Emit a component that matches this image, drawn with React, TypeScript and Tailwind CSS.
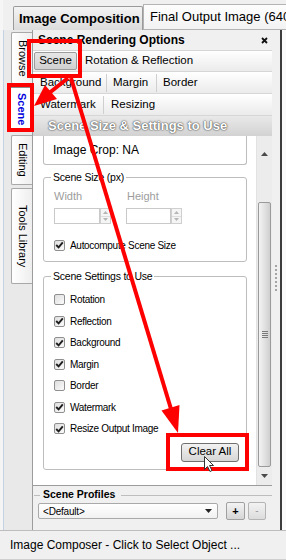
import React from "react";

const F = "font-['Liberation_Sans',Arial,sans-serif]";

function Check({ checked }: { checked?: boolean }) {
  return (
    <span className="w-[11px] h-[11px] shrink-0 rounded-[2px] border border-[#8f8f8f] bg-gradient-to-br from-[#dedede] to-[#fbfbfb] flex items-center justify-center">
      {checked && (
        <svg width="9" height="8" viewBox="0 0 9 8">
          <path d="M1.2 4 L3.6 6.4 L7.8 1.4" stroke="#1e1e1e" strokeWidth="1.9" fill="none" />
        </svg>
      )}
    </span>
  );
}

function Spinner() {
  return (
    <div className="w-[11px] h-[16px] flex flex-col border border-[#cfcfcf] bg-[#f5f5f5]">
      <div className="flex-1 flex items-center justify-center border-b border-[#dddddd]">
        <svg width="5" height="3" viewBox="0 0 5 3">
          <path d="M0 3 L2.5 0 L5 3Z" fill="#b5b5b5" />
        </svg>
      </div>
      <div className="flex-1 flex items-center justify-center">
        <svg width="5" height="3" viewBox="0 0 5 3">
          <path d="M0 0 L2.5 3 L5 0Z" fill="#b5b5b5" />
        </svg>
      </div>
    </div>
  );
}

function VTab({ label, h, active }: { label: string; h: string; active?: boolean }) {
  return (
    <div
      className={`${h} ${
        active
          ? "w-[23px] bg-white text-[#0000dd] font-bold border-[#8c8c8c]"
          : "w-[21px] bg-gradient-to-r from-[#ffffff] to-[#eeeeee] text-black border-[#a8a8a8]"
      } border border-r-0 rounded-l-[2px] flex items-center justify-center text-[11px] leading-none`}
    >
      <span className="[writing-mode:vertical-rl] whitespace-nowrap">{label}</span>
    </div>
  );
}

const settings: [string, boolean][] = [
  ["Rotation", false],
  ["Reflection", true],
  ["Background", true],
  ["Margin", true],
  ["Border", false],
  ["Watermark", true],
  ["Resize Output Image", true],
];

export default function App() {
  return (
    <div className={`w-[286px] h-[560px] relative overflow-hidden bg-[#f0f0f0] ${F} text-black flex flex-col`}>
      {/* top document tabs */}
      <div className="h-[30px] shrink-0 flex items-end pl-[10px] border-l-[3px] border-[#f6f6f6]">
        <div className="w-[130px] h-[24px] border border-b-0 border-[#9a9a9a] rounded-t-[2px] bg-gradient-to-b from-[#f4f4f4] to-[#dcdcdc] flex items-center pl-[5px] text-[13px] font-bold whitespace-nowrap">
          Image Composition
        </div>
        <div className="flex-1 min-w-0 h-[26px] border-t border-l border-b border-[#b3b3b3] bg-gradient-to-b from-[#fdfdfd] to-[#f3f3f3] flex items-center pl-[6px] text-[13px] whitespace-nowrap overflow-hidden">
          Final Output Image (640
        </div>
      </div>

      {/* middle */}
      <div className="h-[500px] shrink-0 flex">
        {/* left vertical tabs */}
        <div className="w-[32px] shrink-0 flex bg-[#f4f4f4]">
          <div className="w-[3px] shrink-0" />
          <div className="flex-1 border-l border-[#c3d3e6] bg-[#e9e9e9] flex flex-col items-end pt-[2px] gap-[3px]">
            <VTab label="Browse" h="h-[52px]" />
            <VTab label="Scene" h="h-[45px]" active />
            <VTab label="Editing" h="h-[50px]" />
            <VTab label="Tools Library" h="h-[96px]" />
          </div>
        </div>

        {/* main panel */}
        <div className="w-[240px] shrink-0 border-l border-[#9c9c9c] flex flex-col">
          {/* header */}
          <div className="h-[20px] shrink-0 flex items-center justify-between pl-[5px] pr-[4px] text-[12px] font-bold whitespace-nowrap">
            <span>Scene Rendering Options</span>
            <svg width="7" height="7" viewBox="0 0 7 7">
              <path d="M1 1 L6 6 M6 1 L1 6" stroke="#111" strokeWidth="1.8" />
            </svg>
          </div>
          {/* tab rows */}
          <div className="h-[22px] shrink-0 flex items-center pl-[1px] border-y border-[#d6d6d6] bg-gradient-to-b from-[#ffffff] to-[#ebebeb] text-[11.5px] whitespace-nowrap">
            <div className="w-[43px] h-[18px] rounded-[2px] border border-[#9c9c9c] bg-gradient-to-b from-[#e6e6e6] to-[#d0d0d0] flex items-center justify-center">
              Scene
            </div>
            <span className="ml-[8px]">Rotation &amp; Reflection</span>
          </div>
          <div className="h-[22px] shrink-0 flex items-center pl-[7px] border-b border-[#d6d6d6] bg-gradient-to-b from-[#ffffff] to-[#ebebeb] text-[11.5px] whitespace-nowrap">
            <span className="w-[66px]">Background</span>
            <span className="w-px h-[18px] bg-[#cfcfcf]" />
            <span className="w-[49px] pl-[6px]">Margin</span>
            <span className="w-px h-[18px] bg-[#cfcfcf]" />
            <span className="pl-[6px]">Border</span>
          </div>
          <div className="h-[22px] shrink-0 flex items-center pl-[7px] border-b border-[#d6d6d6] bg-gradient-to-b from-[#ffffff] to-[#ebebeb] text-[11.5px] whitespace-nowrap">
            <span className="w-[63px]">Watermark</span>
            <span className="w-px h-[18px] bg-[#cfcfcf]" />
            <span className="pl-[7px]">Resizing</span>
          </div>
          {/* band */}
          <div className="h-[20px] shrink-0 flex items-center pl-[15px] bg-gradient-to-b from-[#e9e9e9] to-[#d2d2d2] text-[13px] font-bold text-white whitespace-nowrap [text-shadow:0_0_2px_#4a4a4a,0_0_1px_#333]">
            Scene Size &amp; Settings to Use
          </div>
          {/* scroll region */}
          <div className="h-[349px] shrink-0 flex">
            <div className="w-[223px] bg-white pl-[10px] pr-[9px] overflow-hidden">
              <div className="h-[29px] border border-t-0 border-[#bdbdbd] rounded-b-[3px] flex items-center pl-[9px] text-[12px] whitespace-nowrap">
                Image Crop: NA
              </div>
              <fieldset className="mt-[6px] border border-[#bdbdbd] rounded-[3px] pl-[10px] pr-[7px] pb-[10px] pt-[7px]">
                <legend className="-ml-[3px] px-[2px] text-[10.5px] leading-[12px] tracking-[-0.02em] whitespace-nowrap">Scene Size (px)</legend>
                <div className="h-[12px] flex text-[11px] leading-[12px] text-[#9d9d9d]">
                  <span className="w-[73px]">Width</span>
                  <span>Height</span>
                </div>
                <div className="mt-[6px] flex items-center">
                  <div className="w-[46px] h-[16px] border border-[#c9c9c9] bg-white" />
                  <Spinner />
                  <div className="ml-[15px] w-[45px] h-[16px] border border-[#c9c9c9] bg-white" />
                  <Spinner />
                </div>
                <div className="mt-[15px] h-[12px] flex items-center gap-[5px] text-[10px] tracking-[-0.03em] whitespace-nowrap">
                  <Check checked />
                  <span>Autocompute Scene Size</span>
                </div>
              </fieldset>
              <fieldset className="mt-[8px] border border-[#bdbdbd] rounded-[3px] pl-[10px] pr-[7px] pb-[7px] pt-[7px]">
                <legend className="-ml-[3px] px-[2px] text-[10.5px] leading-[12px] tracking-[-0.02em] whitespace-nowrap">Scene Settings to Use</legend>
                {settings.map(([label, c]) => (
                  <div key={label} className="h-[21.5px] flex items-center gap-[5px] text-[10px] tracking-[-0.03em] whitespace-nowrap">
                    <Check checked={c} />
                    <span>{label}</span>
                  </div>
                ))}
                <div className="mt-[3px] flex justify-end">
                  <div className="w-[58px] h-[19px] rounded-[3px] border border-[#707070] bg-gradient-to-b from-[#f2f2f2] to-[#d6d6d6] flex items-center justify-center text-[11.5px]">
                    Clear All
                  </div>
                </div>
              </fieldset>
            </div>
            {/* scrollbar */}
            <div className="w-[16px] bg-[#ececec] border-l border-[#e2e2e2] flex flex-col items-center">
              <div className="h-[36px] flex items-center justify-center">
                <svg width="7" height="4" viewBox="0 0 7 4">
                  <path d="M0 4 L3.5 0 L7 4Z" fill="#4a4a4a" />
                </svg>
              </div>
              <div className="h-[30px]" />
              <div className="w-[13px] h-[265px] rounded-[2px] border border-[#9a9a9a] bg-gradient-to-r from-[#f3f3f3] via-[#e2e2e2] to-[#cfcfcf] flex flex-col items-center justify-center gap-[1px]">
                <div className="w-[6px] h-px bg-[#7a7a7a]" />
                <div className="w-[6px] h-px bg-[#7a7a7a]" />
                <div className="w-[6px] h-px bg-[#7a7a7a]" />
                <div className="w-[6px] h-px bg-[#7a7a7a]" />
              </div>
              <div className="h-[18px] flex items-center justify-center">
                <svg width="7" height="4" viewBox="0 0 7 4">
                  <path d="M0 0 L3.5 4 L7 0Z" fill="#4a4a4a" />
                </svg>
              </div>
            </div>
          </div>
          {/* profiles */}
          <div className="h-[45px] shrink-0 border-t border-[#9c9c9c] flex flex-col">
            <div className="mt-[2px] h-[14px] flex items-center">
              <div className="ml-[1px] w-[6px] h-px bg-[#bdbdbd]" />
              <span className="ml-[3px] text-[10.5px] font-bold whitespace-nowrap">Scene Profiles</span>
              <div className="ml-[6px] flex-1 h-px bg-[#bdbdbd]" />
            </div>
            <div className="h-[18px] flex items-center">
              <div className="ml-[5px] w-[180px] h-[16px] border border-[#a9a9a9] rounded-[2px] bg-gradient-to-b from-[#ffffff] to-[#f1f1f1] flex items-center justify-between pl-[4px] pr-[5px] text-[10px] tracking-[-0.02em]">
                <span>&lt;Default&gt;</span>
                <svg width="7" height="4" viewBox="0 0 7 4">
                  <path d="M0 0 L3.5 4 L7 0Z" fill="#222" />
                </svg>
              </div>
              <div className="ml-[8px] w-[19px] h-[18px] rounded-[2px] border border-[#a0a0a0] bg-gradient-to-b from-[#f3f3f3] to-[#d6d6d6] flex items-center justify-center text-[11px] font-bold leading-none">
                +
              </div>
              <div className="ml-[3px] w-[18px] h-[18px] rounded-[2px] border border-[#b4b4b4] bg-gradient-to-b from-[#f3f3f3] to-[#dcdcdc] flex items-center justify-center text-[10px] text-[#9a9a9a] leading-none">
                -
              </div>
            </div>
          </div>
        </div>

        {/* right side */}
        <div className="w-[8px] shrink-0 flex flex-col items-center">
          <div className="h-[235px]" />
          <div className="h-[26px] w-0 border-l-2 border-dotted border-[#a5a5a5]" />
        </div>
        <div className="w-[2px] shrink-0 bg-[#3c3c3c]" />
        <div className="flex-1 bg-[#fafafa]" />
      </div>

      {/* status bar */}
      <div className="h-[30px] shrink-0 border-t border-[#bdbdbd] border-b border-b-[#cfcfcf] flex items-center pl-[10px] text-[12px] whitespace-nowrap">
        Image Composer - Click to Select Object ...
      </div>

      {/* red annotations */}
      <svg className="absolute inset-0 pointer-events-none" width="286" height="560" viewBox="0 0 286 560">
        <g fill="none" stroke="#ff0000" strokeWidth="4">
          <rect x="29" y="41" width="51" height="35" />
          <rect x="9" y="85" width="23" height="45" />
          <rect x="168" y="435" width="79" height="34" />
          <line x1="68" y1="78" x2="48" y2="94" />
          <line x1="71" y1="78" x2="171" y2="409" />
        </g>
        <g fill="#ff0000">
          <polygon points="34,106 57,99 45,85" />
          <polygon points="178,433 179.5,405 161.5,410.5" />
        </g>
        <path
          d="M204.5 456.5 L204.5 469.5 L207.5 466.5 L210 471.5 L212 470.5 L209.5 465.5 L213.5 465.5 Z"
          fill="#ffffff"
          stroke="#333"
          strokeWidth="1"
        />
      </svg>
    </div>
  );
}
